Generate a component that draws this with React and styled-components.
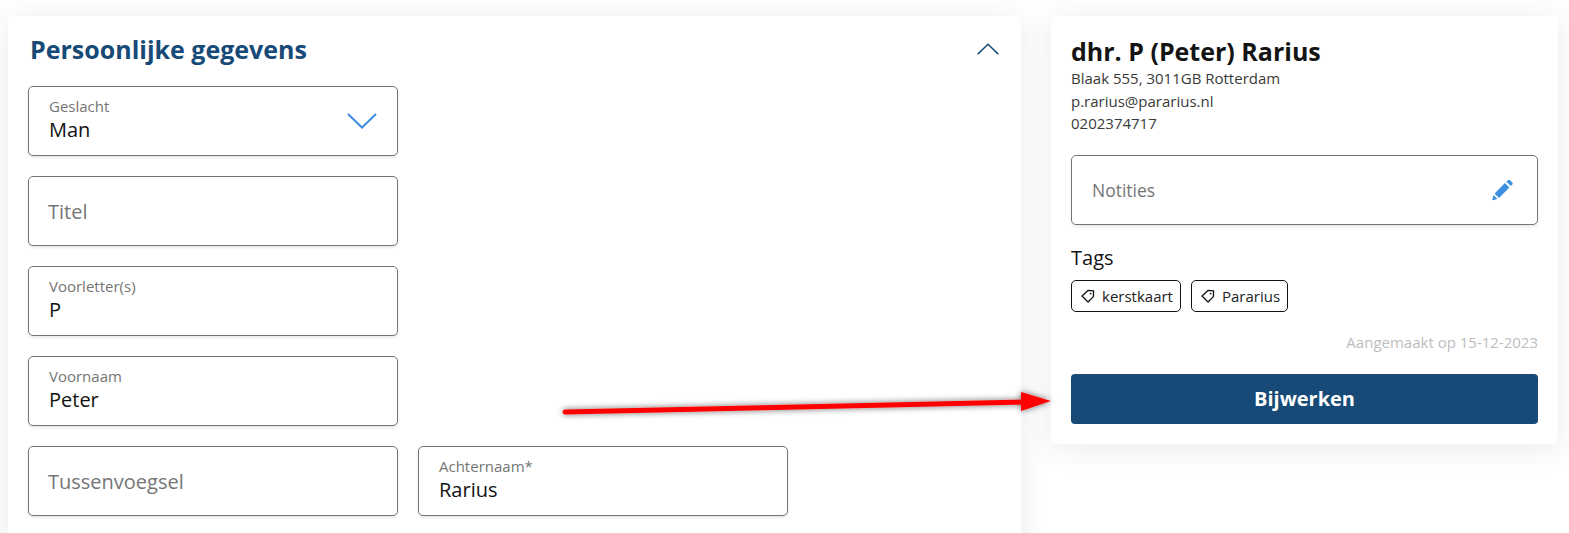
import styled, { createGlobalStyle } from "styled-components";

const GlobalStyle = createGlobalStyle`
  html, body {
    margin: 0;
    height: 100%;
    background: #fff;
    font-family: "Open Sans", sans-serif;
    overflow: hidden;
  }
`;

const Page = styled.div`
  position: relative;
  display: flex;
  align-items: flex-start;
  gap: 30px;
  height: 533px;
  padding: 16px 11px 0 8px;
  box-sizing: border-box;
  overflow: hidden;
`;

const Card = styled.section`
  background: #fff;
  border-radius: 6px;
  box-shadow: 0 4px 30px rgba(40, 50, 90, 0.1);
  box-sizing: border-box;
`;

const MainCard = styled(Card)`
  width: 1013px;
  height: 560px;
  padding: 13px 20px 0;
`;

const SideCard = styled(Card)`
  width: 507px;
  height: 428px;
  padding: 19px 20px 20px;
`;

const Header = styled.div`
  display: flex;
  align-items: center;
  justify-content: space-between;
  height: 40px;
  margin-bottom: 17px;
  padding: 0 0 0 2px;

  svg {
    margin-right: 2px;
  }
`;

const Title = styled.h2`
  margin: 0;
  font-size: 25px;
  line-height: 40px;
  font-weight: 700;
  color: #174a77;
`;

const Form = styled.div`
  display: flex;
  flex-direction: column;
  gap: 20px;
`;

const Row = styled.div`
  display: flex;
  gap: 20px;
`;

const Field = styled.div`
  position: relative;
  display: flex;
  flex-direction: column;
  justify-content: center;
  width: 370px;
  height: 70px;
  padding: 0 20px 3px;
  box-sizing: border-box;
  background: #fff;
  border: 1px solid #757575;
  border-radius: 5px;
  box-shadow: 0 2px 3px rgba(0, 0, 0, 0.09);
`;

const Label = styled.span`
  font-size: 15px;
  line-height: 20px;
  color: #757575;
`;

const Value = styled.span`
  font-size: 20px;
  line-height: 27px;
  color: #111;
`;

const Placeholder = styled.span`
  margin: 3px 0 0 -1px;
  font-size: 20px;
  line-height: 27px;
  color: #757575;
`;

const NotesPlaceholder = styled(Placeholder)`
  margin-left: 0;
  font-size: 17.5px;
`;

const FieldIcon = styled.span`
  position: absolute;
  top: 50%;
  right: ${(p) => p.$right || "20px"};
  display: flex;
  transform: translateY(-50%);
  color: #3d8fdf;
`;

const Name = styled.h1`
  margin: 0;
  font-size: 25px;
  line-height: 32px;
  font-weight: 700;
  color: #141414;
`;

const Contact = styled.p`
  margin: 0;
  font-size: 15px;
  line-height: 22.5px;
  color: #3a3a3a;
`;

const Notes = styled(Field)`
  width: 100%;
  margin-top: 20px;
  padding-bottom: 1px;
`;

const SectionTitle = styled.h3`
  margin: 19px 0 0;
  font-size: 20px;
  line-height: 27px;
  font-weight: 500;
  color: #141414;
`;

const Tags = styled.div`
  display: flex;
  gap: 10px;
  margin-top: 9px;
`;

const Tag = styled.span`
  display: flex;
  align-items: center;
  gap: 7px;
  height: 32px;
  padding: 0 7px 0 9px;
  box-sizing: border-box;
  border: 1px solid #111;
  border-radius: 5px;
  font-size: 15px;
  color: #222;
`;

const Created = styled.p`
  margin: 20px 0 0;
  font-size: 15px;
  line-height: 20px;
  text-align: right;
  color: #bdbdbd;
`;

const Submit = styled.button`
  display: block;
  width: 100%;
  height: 50px;
  margin-top: 22px;
  border: 0;
  border-radius: 4px;
  background: #174a77;
  color: #fff;
  font-family: inherit;
  font-size: 20px;
  font-weight: 700;
`;

const Arrow = styled.svg`
  position: absolute;
  left: 550px;
  top: 380px;
  overflow: visible;
`;

const Chevron = ({ up, color, width, height }) => (
  <svg width={width} height={height} viewBox="0 0 30 16" fill="none" stroke={color} strokeWidth="2">
    <path d={up ? "M1 15 15 1.5 29 15" : "M1 1 15 14.5 29 1"} />
  </svg>
);

const TagIcon = () => (
  <svg width="14" height="14" viewBox="0 0 14 14" fill="none" stroke="#111" strokeWidth="1.3" strokeLinejoin="round">
    <path d="M1 7 7 1.4 12.6 1.8 12.4 7.6 7 13 Z" />
    <circle cx="9.6" cy="4.6" r="0.9" fill="#111" stroke="none" />
  </svg>
);

const EditIcon = () => (
  <svg width="21" height="21" viewBox="0 0 21 21" fill="#3d8fdf">
    <path d="M0 21 1.5 15.6 5.4 19.5Z" />
    <path d="M2.6 14 13 3.6 17.4 8 7 18.4Z" />
    <path d="M14.4 2.2 15.7 0.9a1.8 1.8 0 0 1 2.5 0L20.1 2.8a1.8 1.8 0 0 1 0 2.5L18.8 6.6Z" />
  </svg>
);

const App = () => {
  return (
    <>
      <GlobalStyle />
      <Page>
        <MainCard>
          <Header>
            <Title>Persoonlijke gegevens</Title>
            <Chevron up color="#174a77" width="22" height="12" />
          </Header>
          <Form>
            <Field>
              <Label>Geslacht</Label>
              <Value>Man</Value>
              <FieldIcon>
                <Chevron color="#3d8fdf" width="30" height="16" />
              </FieldIcon>
            </Field>
            <Field>
              <Placeholder>Titel</Placeholder>
            </Field>
            <Field>
              <Label>Voorletter(s)</Label>
              <Value>P</Value>
            </Field>
            <Field>
              <Label>Voornaam</Label>
              <Value>Peter</Value>
            </Field>
            <Row>
              <Field>
                <Placeholder>Tussenvoegsel</Placeholder>
              </Field>
              <Field>
                <Label>Achternaam*</Label>
                <Value>Rarius</Value>
              </Field>
            </Row>
          </Form>
        </MainCard>

        <SideCard>
          <Name>dhr. P (Peter) Rarius</Name>
          <Contact>Blaak 555, 3011GB Rotterdam</Contact>
          <Contact>p.rarius@pararius.nl</Contact>
          <Contact>0202374717</Contact>
          <Notes>
            <NotesPlaceholder>Notities</NotesPlaceholder>
            <FieldIcon $right="24px">
              <EditIcon />
            </FieldIcon>
          </Notes>
          <SectionTitle>Tags</SectionTitle>
          <Tags>
            <Tag>
              <TagIcon />
              kerstkaart
            </Tag>
            <Tag>
              <TagIcon />
              Pararius
            </Tag>
          </Tags>
          <Created>Aangemaakt op 15-12-2023</Created>
          <Submit>Bijwerken</Submit>
        </SideCard>

        <Arrow width="500" height="40" viewBox="0 0 500 40">
          <defs>
            <filter id="arrow-shadow" x="-5%" y="-100%" width="110%" height="300%">
              <feDropShadow dx="0" dy="0" stdDeviation="3" floodColor="#000" floodOpacity="0.6" />
            </filter>
          </defs>
          <g filter="url(#arrow-shadow)">
            <path d="M15 32 L475 22" stroke="#f00" strokeWidth="5" strokeLinecap="round" />
            <path d="M471 12 L501 21 L471 31 Z" fill="#f00" />
          </g>
        </Arrow>
      </Page>
    </>
  );
};

export default App;
